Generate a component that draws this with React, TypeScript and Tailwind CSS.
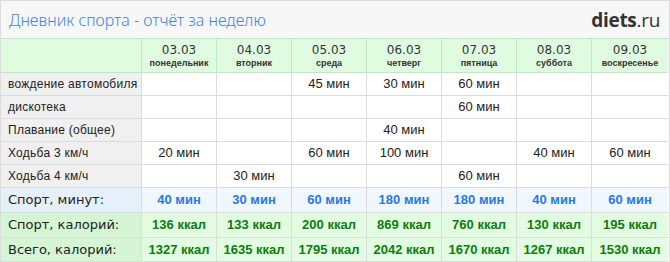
import React from "react";

const days = [
  ["03.03", "понедельник"],
  ["04.03", "вторник"],
  ["05.03", "среда"],
  ["06.03", "четверг"],
  ["07.03", "пятница"],
  ["08.03", "суббота"],
  ["09.03", "воскресенье"],
];

const rows: [string, string[]][] = [
  ["вождение автомобиля", ["", "", "45 мин", "30 мин", "60 мин", "", ""]],
  ["дискотека", ["", "", "", "", "60 мин", "", ""]],
  ["Плавание (общее)", ["", "", "", "40 мин", "", "", ""]],
  ["Ходьба 3 км/ч", ["20 мин", "", "60 мин", "100 мин", "", "40 мин", "60 мин"]],
  ["Ходьба 4 км/ч", ["", "30 мин", "", "", "60 мин", "", ""]],
];

const minutes = ["40 мин", "30 мин", "60 мин", "180 мин", "180 мин", "40 мин", "60 мин"];
const sportCal = ["136 ккал", "133 ккал", "200 ккал", "869 ккал", "760 ккал", "130 ккал", "195 ккал"];
const totalCal = ["1327 ккал", "1635 ккал", "1795 ккал", "2042 ккал", "1670 ккал", "1267 ккал", "1530 ккал"];

function SummaryRow({
  label,
  values,
  h,
  labelBg,
  cellBg,
  color,
}: {
  label: string;
  values: string[];
  h: string;
  labelBg: string;
  cellBg: string;
  color: string;
}) {
  return (
    <>
      <div className={`${h} ${labelBg} border-r border-b border-[#dcdcdc] flex items-center pl-[7px] text-[13px] text-[#222] font-['DejaVu_Sans',sans-serif] whitespace-nowrap`}>
        {label}
      </div>
      {values.map((v, i) => (
        <div
          key={i}
          className={`${h} ${cellBg} ${color} border-b border-[#dcdcdc] flex items-center justify-center text-[13px] font-bold font-['Liberation_Sans',Arial,sans-serif] whitespace-nowrap ${i < 6 ? "border-r" : ""}`}
        >
          {v}
        </div>
      ))}
    </>
  );
}

export default function App() {
  return (
    <div className="w-[670px] h-[262px] overflow-hidden border-l border-r border-t border-[#dcdcdc] bg-white">
      <div className="h-[37px] bg-[#f7f7f7] flex items-center justify-between pl-[8px] pr-[9px]">
        <div className="text-[16px] text-[#4a80e0] font-light pt-[1px] font-['Noto_Sans',sans-serif]">
          Дневник спорта - отчёт за неделю
        </div>
        <div className="text-[19px] text-[#333] pt-[2px] tracking-[-0.3px] font-['Open_Sans',sans-serif]">
          <span className="font-bold">diets</span>
          <span>.ru</span>
        </div>
      </div>
      <div className="grid grid-cols-[141px_repeat(6,75px)_76px] border-t border-[#bfe8bf]">
        <div className="h-[34px] bg-[#e0fce0] border-r border-b border-[#bfe8bf]" />
        {days.map(([d, n], i) => (
          <div
            key={d}
            className={`h-[34px] bg-[#e0fce0] border-b border-[#bfe8bf] flex flex-col items-center justify-center ${i < 6 ? "border-r" : ""}`}
          >
            <div className="text-[12px] leading-[14px] text-[#333] pt-[2px] font-['DejaVu_Sans',sans-serif]">{d}</div>
            <div className="text-[9px] leading-[13px] font-bold text-[#333] font-['Liberation_Sans',Arial,sans-serif]">{n}</div>
          </div>
        ))}

        {rows.map(([label, vals]) => (
          <React.Fragment key={label}>
            <div className="h-[23px] bg-[#f0f0f0] border-r border-b border-[#dcdcdc] flex items-center pl-[7px] text-[12px] tracking-[0.25px] text-[#222] whitespace-nowrap font-['Liberation_Sans',Arial,sans-serif]">
              {label}
            </div>
            {vals.map((v, i) => (
              <div
                key={i}
                className={`h-[23px] border-b border-[#dcdcdc] flex items-center justify-center text-[13px] text-[#222] font-['Liberation_Sans',Arial,sans-serif] ${i < 6 ? "border-r" : ""}`}
              >
                {v}
              </div>
            ))}
          </React.Fragment>
        ))}

        <SummaryRow label="Спорт, минут:" values={minutes} h="h-[25px]" labelBg="bg-[#e6f0fb]" cellBg="bg-[#f0f7ff]" color="text-[#2a78e0]" />
        <SummaryRow label="Спорт, калорий:" values={sportCal} h="h-[25px]" labelBg="bg-[#d5f6d5]" cellBg="bg-[#e3fde3]" color="text-[#0a7d0a]" />
        <SummaryRow label="Всего, калорий:" values={totalCal} h="h-[24px]" labelBg="bg-[#d5f6d5]" cellBg="bg-[#e3fde3]" color="text-[#0a7d0a]" />
      </div>
    </div>
  );
}
